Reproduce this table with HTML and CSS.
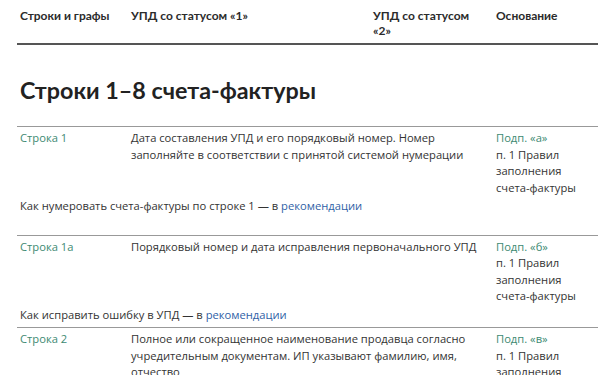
FILE: index.html
```html
<html>
<head>
<meta charset="utf-8">
<link rel="stylesheet" href="styles.css">
<title>Строки 1–8 счета-фактуры</title>
</head>
<body>

<div class="table">
  <div class="head">
    <div>Строки и графы</div>
    <div>УПД со статусом «1»</div>
    <div>УПД со статусом «2»</div>
    <div>Основание</div>
  </div>

  <h2 class="section">Строки 1–8 счета-фактуры</h2>

  <div class="row tall">
    <div class="name">Строка 1</div>
    <div class="desc">Дата составления УПД и его порядковый номер. Номер заполняйте в соответствии с принятой системой нумерации</div>
    <div class="basis"><span class="name">Подп. «а»</span><br>п. 1 Правил заполнения счета-фактуры</div>
    <div class="note">Как нумеровать счета-фактуры по строке 1 — в <a href="#">рекомендации</a></div>
  </div>

  <div class="row">
    <div class="name">Строка 1а</div>
    <div class="desc">Порядковый номер и дата исправления первоначального УПД</div>
    <div class="basis"><span class="name">Подп. «б»</span><br>п. 1 Правил заполнения счета-фактуры</div>
    <div class="note">Как исправить ошибку в УПД — в <a href="#">рекомендации</a></div>
  </div>

  <div class="row">
    <div class="name">Строка 2</div>
    <div class="desc">Полное или сокращенное наименование продавца согласно учредительным документам. ИП указывают фамилию, имя, отчество</div>
    <div class="basis"><span class="name">Подп. «в»</span><br>п. 1 Правил заполнения счета-фактуры</div>
  </div>
</div>

</body>
</html>
```

FILE: styles.css
```css
/* Page */
body {
  margin: 0;
  font-family: "Open Sans", Lato, sans-serif;
  font-size: 11.2px;
  color: #333;
  background: #fff;
  overflow: hidden;
}

.table {
  margin-left: 17px;
  width: 600px;
}

/* Column header */
.head {
  display: grid;
  grid-template-columns: 111px 242px 123px 1fr;
  padding: 8px 0 5px 3px;
  border-bottom: 2px solid #555;
  font-family: Lato, sans-serif;
  font-weight: bold;
  font-size: 12px;
  line-height: 15px;
  color: #2b2b2b;
}

.head div {
  padding-right: 14px;
}

.section {
  margin: 30px 0 0 3px;
  height: 51px;
  font-family: Lato, sans-serif;
  font-size: 23.3px;
  line-height: 30px;
  color: #222;
}

/* Table rows */
.row {
  display: grid;
  grid-template-columns: 111px 365px 1fr;
  padding: 3px 0 4px 3px;
  border-top: 1px solid #999;
  line-height: 16.5px;
}

.row.tall {
  padding-bottom: 20px;
}

.basis {
  width: 90px;
}

.name {
  color: #3d8a72;
}

.note {
  grid-column: 1 / 4;
  margin-top: 2px;
}

.note a {
  color: #2f5fa6;
  text-decoration: none;
}
```
